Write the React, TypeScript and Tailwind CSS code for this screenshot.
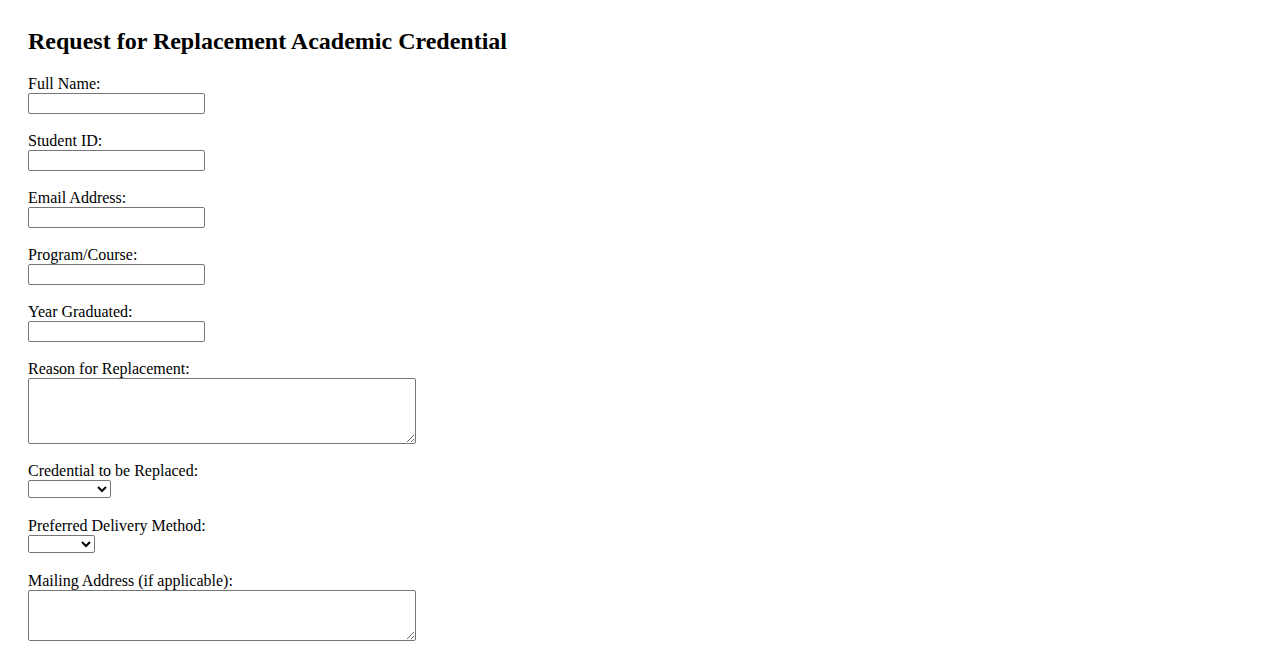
import React from "react";

const labelCls = "block text-[16px] leading-[18px] text-black";
const inputCls =
  "block w-[177px] h-[21px] border border-[#767676] rounded-[2px] bg-white px-[2px] text-[13px] mb-[18px]";

const textFields = [
  { id: "fullName", label: "Full Name:" },
  { id: "studentId", label: "Student ID:" },
  { id: "email", label: "Email Address:" },
  { id: "program", label: "Program/Course:" },
  { id: "year", label: "Year Graduated:" },
];

const App: React.FC = () => {
  return (
    <div className="min-h-screen bg-white px-[28px] pt-[27px] pb-10 font-['Liberation_Serif',_'Times_New_Roman',_serif] text-black">
      <h2 className="text-[24px] leading-[28px] font-bold mb-[20px]">
        Request for Replacement Academic Credential
      </h2>

      <form onSubmit={e => e.preventDefault()}>
        {textFields.map(f => (
          <div key={f.id}>
            <label htmlFor={f.id} className={labelCls}>
              {f.label}
            </label>
            <input id={f.id} type="text" className={inputCls} />
          </div>
        ))}

        <label htmlFor="reason" className={labelCls}>
          Reason for Replacement:
        </label>
        <textarea
          id="reason"
          className="block w-[388px] h-[66px] border border-[#767676] rounded-[2px] bg-white mb-[18px]"
        />

        <label htmlFor="credential" className={labelCls}>
          Credential to be Replaced:
        </label>
        <select
          id="credential"
          className="block w-[83px] h-[18px] border border-[#767676] rounded-[2px] bg-white text-[13px] mb-[19px]"
        >
          <option value=""></option>
          <option value="diploma">Diploma</option>
          <option value="transcript">Transcript</option>
        </select>

        <label htmlFor="delivery" className={labelCls}>
          Preferred Delivery Method:
        </label>
        <select
          id="delivery"
          className="block w-[67px] h-[18px] border border-[#767676] rounded-[2px] bg-white text-[13px] mb-[19px]"
        >
          <option value=""></option>
          <option value="pickup">Pickup</option>
          <option value="mail">Mail</option>
        </select>

        <label htmlFor="mailing" className={labelCls}>
          Mailing Address (if applicable):
        </label>
        <textarea
          id="mailing"
          className="block w-[388px] h-[51px] border border-[#767676] rounded-[2px] bg-white"
        />
      </form>
    </div>
  );
};

export default App;
